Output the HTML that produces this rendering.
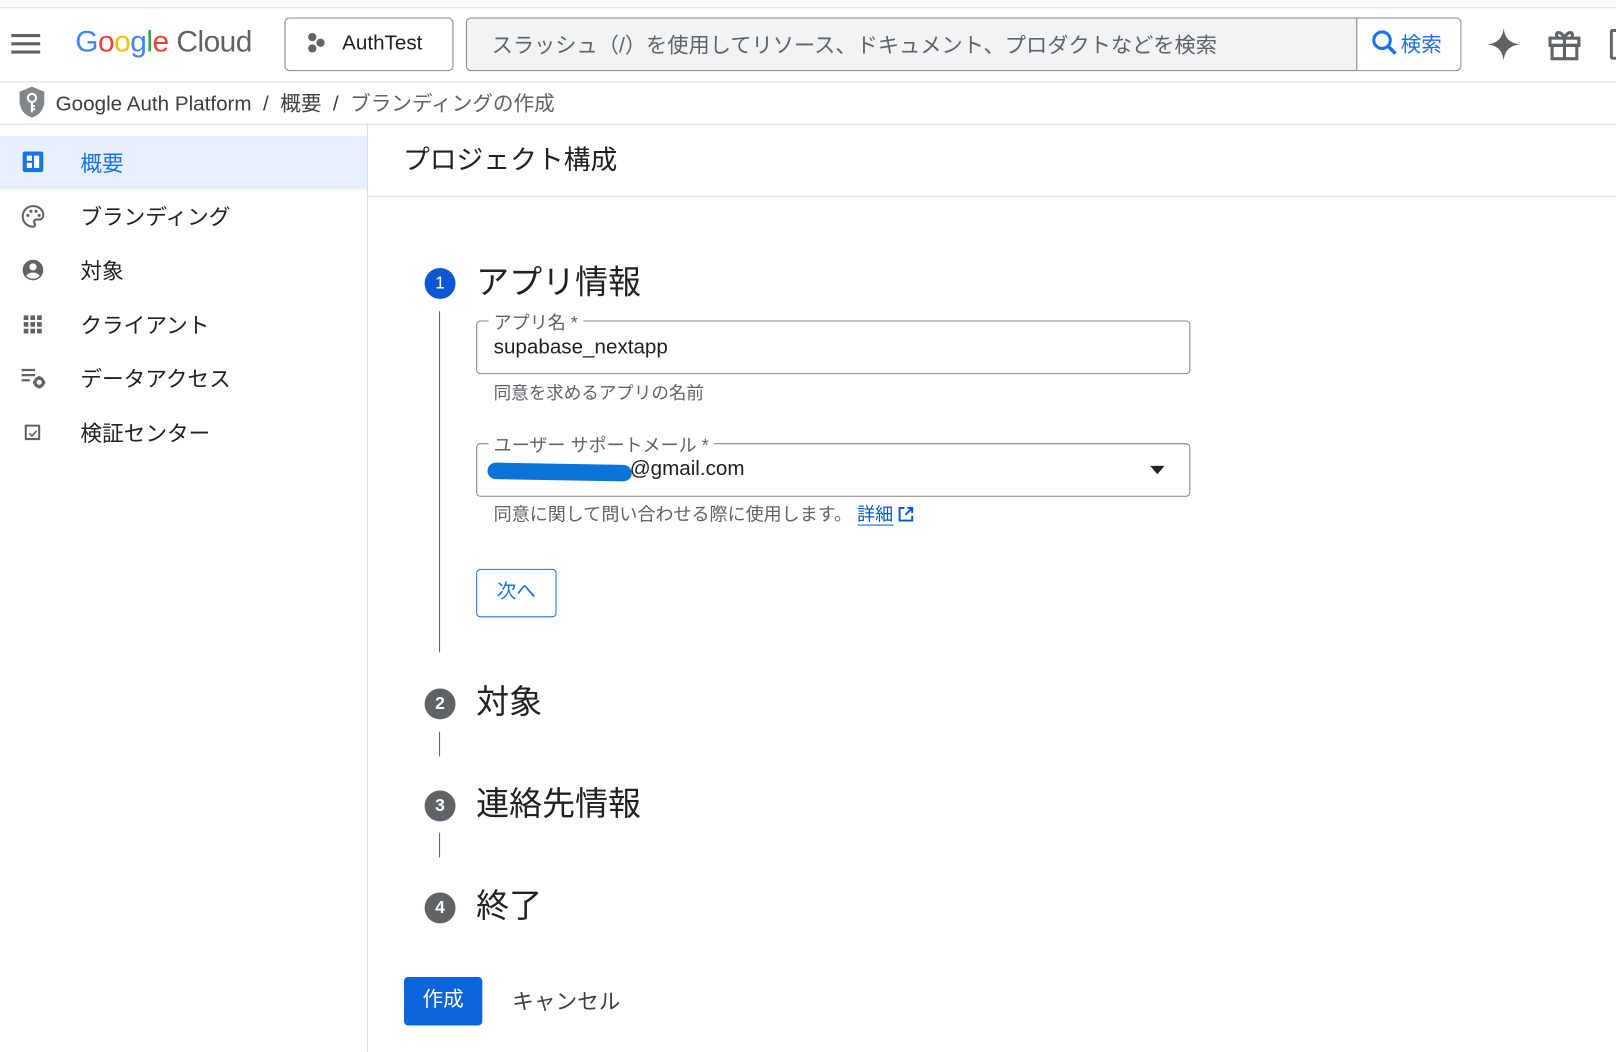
<!DOCTYPE html>
<html><head><meta charset="utf-8"><style>
*{margin:0;padding:0;box-sizing:border-box}
body{width:1616px;height:1051px;position:relative;overflow:hidden;background:#fff;font-family:"Liberation Sans","Noto Sans CJK JP",sans-serif;color:#202124}
#w{position:absolute;left:0;top:0;width:1568px;height:1020px;transform:scale(1.0306);transform-origin:0 0}
.a{position:absolute;white-space:nowrap}
.hl{position:absolute;left:0;width:1568px;height:1px;background:#dadce0}
</style></head><body><div id="w">
<div class="a" style="left:0;top:0;width:1568px;height:7px;background:#f8f9fa"></div>
<div class="hl" style="top:7px"></div>
<div class="hl" style="top:79px"></div>
<div class="hl" style="top:120px"></div>
<div class="a" style="left:11px;top:33px;width:28px;height:3px;background:#5f6368"></div>
<div class="a" style="left:11px;top:41px;width:28px;height:3px;background:#5f6368"></div>
<div class="a" style="left:11px;top:49px;width:28px;height:3px;background:#5f6368"></div>
<div class="a" style="left:73px;top:25px;font-size:29px;letter-spacing:-0.5px"><span style="color:#4285f4">G</span><span style="color:#ea4335">o</span><span style="color:#fbbc04">o</span><span style="color:#4285f4">g</span><span style="color:#34a853">l</span><span style="color:#ea4335">e</span> <span style="color:#5f6368">Cloud</span></div>
<div class="a" style="left:276px;top:17px;width:164px;height:52px;border:1px solid #80868b;border-radius:5px"></div>
<svg class="a" style="left:296px;top:31px" width="22" height="22" viewBox="0 0 22 22"><circle cx="7" cy="5" r="4" fill="#5f6368"/><circle cx="7" cy="16" r="4" fill="#5f6368"/><circle cx="15" cy="10.5" r="4" fill="#5f6368"/></svg>
<div class="a" style="left:332px;top:31px;font-size:20px">AuthTest</div>
<div class="a" style="left:452px;top:17px;width:966px;height:52px;border:1px solid #80868b;border-radius:5px;background:#f1f3f4;overflow:hidden"><div style="position:absolute;left:863px;top:0;width:103px;height:52px;background:#fff;border-left:1px solid #80868b"></div></div>
<div class="a" style="left:477px;top:27px;font-size:20.6px;color:#5f6368">スラッシュ（/）を使用してリソース、ドキュメント、プロダクトなどを検索</div>
<svg class="a" style="left:1330px;top:28px" width="28" height="28" viewBox="0 0 28 28"><circle cx="11" cy="11" r="8" fill="none" stroke="#1a73e8" stroke-width="3"/><path d="M17 17l7 7" stroke="#1a73e8" stroke-width="3.5"/></svg>
<div class="a" style="left:1359px;top:27px;font-size:20px;color:#1a73e8">検索</div>
<svg class="a" style="left:1441px;top:25px" width="36" height="36" viewBox="0 0 36 36"><path d="M18 2C19 12 24 17 34 18 24 19 19 24 18 34 17 24 12 19 2 18 12 17 17 12 18 2Z" fill="#5f6368"/></svg>
<svg class="a" style="left:1501px;top:26px" width="34" height="34" viewBox="0 0 34 34" fill="none" stroke="#5f6368" stroke-width="3"><rect x="3" y="11" width="28" height="7"/><rect x="5" y="18" width="24" height="13"/><path d="M17 11v20M17 11c-3-8-10-6-7-1M17 11c3-8 10-6 7-1"/></svg>
<div class="a" style="left:1562px;top:28px;width:10px;height:30px;border:3px solid #5f6368;border-right:none;border-radius:3px 0 0 3px"></div>
<svg class="a" style="left:17px;top:83px" width="28" height="32" viewBox="0 0 28 32"><path d="M14 1L26 6v9c0 8-5 14-12 16C7 29 2 23 2 15V6z" fill="#80868b"/><circle cx="14" cy="12" r="4" fill="none" stroke="#fff" stroke-width="2"/><path d="M14 16v10M14 20h3M14 23h3" stroke="#fff" stroke-width="2"/></svg>
<div class="a" style="left:54px;top:84px;font-size:20px;color:#3c4043">Google Auth Platform &nbsp;/ &nbsp;概要 &nbsp;/ &nbsp;<span style="color:#5f6368">ブランディングの作成</span></div>
<div class="a" style="left:356px;top:121px;width:1px;height:900px;background:#dadce0"></div>
<div class="a" style="left:0;top:132px;width:356px;height:52px;background:#e8f0fe"></div>
<div class="a" style="left:22px;top:147px;width:20px;height:20px;background:#1a73e8;border-radius:2px"><div style="position:absolute;left:4px;top:4px;width:5px;height:5px;background:#fff"></div><div style="position:absolute;left:4px;top:11px;width:5px;height:5px;background:#fff"></div><div style="position:absolute;left:11px;top:4px;width:5px;height:12px;background:#fff"></div></div>
<div class="a" style="left:78px;top:143px;font-size:21px;color:#1a73e8">概要</div>
<svg class="a" style="left:20px;top:198px" width="24" height="24" viewBox="0 0 24 24"><path d="M12 2C6.5 2 2 6.5 2 12s4.5 10 10 10c1.5 0 2-1 2-2 0-1.5-1-1.5-1-3 0-1 1-2 2.5-2H18c2.5 0 4-2 4-4.5C22 5.5 17.5 2 12 2z" fill="none" stroke="#5f6368" stroke-width="2"/><circle cx="7" cy="11" r="1.5" fill="#5f6368"/><circle cx="10" cy="7" r="1.5" fill="#5f6368"/><circle cx="15" cy="7" r="1.5" fill="#5f6368"/><circle cx="18" cy="11" r="1.5" fill="#5f6368"/></svg>
<div class="a" style="left:78px;top:195px;font-size:21px">ブランディング</div>
<svg class="a" style="left:20px;top:250px" width="24" height="24" viewBox="0 0 24 24"><circle cx="12" cy="12" r="10" fill="#5f6368"/><circle cx="12" cy="9" r="3.5" fill="#fff"/><path d="M5.5 17.5c2-2.5 4-3 6.5-3s4.5.5 6.5 3c-1.5 2-4 3-6.5 3s-5-1-6.5-3z" fill="#fff"/></svg>
<div class="a" style="left:78px;top:247px;font-size:21px">対象</div>
<svg class="a" style="left:22px;top:305px" width="20" height="20" viewBox="0 0 20 20" fill="#5f6368"><rect x="1" y="1" width="4.5" height="4.5"/><rect x="7.5" y="1" width="4.5" height="4.5"/><rect x="14" y="1" width="4.5" height="4.5"/><rect x="1" y="7.5" width="4.5" height="4.5"/><rect x="7.5" y="7.5" width="4.5" height="4.5"/><rect x="14" y="7.5" width="4.5" height="4.5"/><rect x="1" y="14" width="4.5" height="4.5"/><rect x="7.5" y="14" width="4.5" height="4.5"/><rect x="14" y="14" width="4.5" height="4.5"/></svg>
<div class="a" style="left:78px;top:300px;font-size:21px">クライアント</div>
<svg class="a" style="left:20px;top:356px" width="26" height="22" viewBox="0 0 26 22"><path d="M1 3h13M1 8h13M1 13h8" stroke="#5f6368" stroke-width="2.2"/><circle cx="18" cy="15" r="4" fill="none" stroke="#5f6368" stroke-width="3"/><path d="M18 9v3M18 18v3M12 15h3M21 15h3" stroke="#5f6368" stroke-width="2.5"/></svg>
<div class="a" style="left:78px;top:352px;font-size:21px">データアクセス</div>
<div class="a" style="left:24px;top:412px;width:15px;height:15px;border:2px solid #5f6368;border-radius:1px"></div>
<svg class="a" style="left:26px;top:414px" width="12" height="12" viewBox="0 0 12 12"><path d="M2.5 6.5l2.5 2.5 4.5-5" stroke="#5f6368" stroke-width="1.6" fill="none"/></svg>
<div class="a" style="left:78px;top:405px;font-size:21px">検証センター</div>
<div class="a" style="left:391px;top:135px;font-size:26px">プロジェクト構成</div>
<div class="a" style="left:357px;top:190px;width:1211px;height:1px;background:#dadce0"></div>
<div class="a" style="left:412px;top:260px;width:30px;height:30px;border-radius:50%;background:#0b57d0;color:#fff;font-size:17px;text-align:center;line-height:30px">1</div>
<div class="a" style="left:462px;top:249px;font-size:32px">アプリ情報</div>
<div class="a" style="left:426px;top:302px;width:1px;height:331px;background:#5f6368"></div>
<div class="a" style="left:462px;top:311px;width:693px;height:52px;border:1px solid #80868b;border-radius:4px"></div>
<div class="a" style="left:474px;top:300px;font-size:17.5px;color:#5f6368;background:#fff;padding:0 5px">アプリ名 *</div>
<div class="a" style="left:479px;top:326px;font-size:20px">supabase_nextapp</div>
<div class="a" style="left:479px;top:367px;font-size:17px;color:#5f6368">同意を求めるアプリの名前</div>
<div class="a" style="left:462px;top:430px;width:693px;height:52px;border:1px solid #80868b;border-radius:4px"></div>
<div class="a" style="left:474px;top:419px;font-size:17.5px;color:#5f6368;background:#fff;padding:0 5px">ユーザー サポートメール *</div>
<div class="a" style="left:473px;top:450px;width:140px;height:16px;background:#0a74d8;border-radius:8px;transform:rotate(1deg)"></div>
<div class="a" style="left:611px;top:444px;font-size:20px">@gmail.com</div>
<svg class="a" style="left:1115px;top:451px" width="16" height="10"><path d="M1 1h14L8 9z" fill="#202124"/></svg>
<div class="a" style="left:479px;top:486px;font-size:17.5px;color:#5f6368">同意に関して問い合わせる際に使用します。 <span style="color:#0b57d0;border-bottom:1px solid #0b57d0">詳細</span> <svg width="16" height="16" viewBox="0 0 17 17" fill="none" stroke="#0b57d0" stroke-width="2" style="vertical-align:-2px"><path d="M7 2H2v13h13v-5M10 2h5v5M15 2L8 9"/></svg></div>
<div class="a" style="left:462px;top:552px;width:78px;height:47px;border:1px solid #1a73e8;border-radius:4px;color:#1a73e8;font-size:19px;text-align:center;line-height:44px">次へ</div>
<div class="a" style="left:412px;top:668px;width:30px;height:30px;border-radius:50%;background:#5f6368;color:#fff;font-size:17px;font-weight:bold;text-align:center;line-height:30px">2</div>
<div class="a" style="left:462px;top:656px;font-size:32px">対象</div>
<div class="a" style="left:426px;top:710px;width:1px;height:24px;background:#5f6368"></div>
<div class="a" style="left:412px;top:767px;width:30px;height:30px;border-radius:50%;background:#5f6368;color:#fff;font-size:17px;font-weight:bold;text-align:center;line-height:30px">3</div>
<div class="a" style="left:462px;top:755px;font-size:32px">連絡先情報</div>
<div class="a" style="left:426px;top:808px;width:1px;height:24px;background:#5f6368"></div>
<div class="a" style="left:412px;top:866px;width:30px;height:30px;border-radius:50%;background:#5f6368;color:#fff;font-size:17px;font-weight:bold;text-align:center;line-height:30px">4</div>
<div class="a" style="left:462px;top:854px;font-size:32px">終了</div>
<div class="a" style="left:392px;top:948px;width:76px;height:47px;background:#0b65dc;border-radius:4px;color:#fff;font-size:20px;text-align:center;line-height:45px">作成</div>
<div class="a" style="left:497px;top:956px;font-size:21px;color:#3c4043">キャンセル</div>
</div></body></html>
